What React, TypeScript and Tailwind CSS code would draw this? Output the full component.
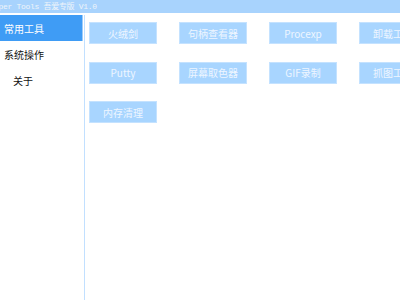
const TOOLS = ['火绒剑', '句柄查看器', 'Procexp', '卸载工具', 'Putty', '屏幕取色器', 'GIF录制', '抓图工具', '内存清理']

const NAV = [
  { label: '常用工具', active: true, indent: false },
  { label: '系统操作', active: false, indent: false },
  { label: '关于', active: false, indent: true },
]

export default function App() {
  return (
    <div className="w-[400px] h-[300px] bg-white overflow-hidden flex flex-col" style={{ fontFamily: '"Noto Sans CJK SC", "Noto Sans", sans-serif' }}>
      <div className="h-[13px] shrink-0 bg-[#a8d3fd] flex items-center overflow-hidden">
        <span className="-ml-[15px] whitespace-nowrap text-[8px] leading-none text-[#eef4fa] tracking-[-0.3px]" style={{ fontFamily: '"Liberation Mono", "Noto Sans CJK SC", monospace' }}>
          Helper Tools 吾爱专版 V1.0
        </span>
      </div>
      <div className="flex flex-1 mt-[2px] min-h-0">
        <div className="w-[84px] shrink-0 flex flex-col">
          {NAV.map(n => (
            <div key={n.label}
              className={`h-[26px] flex items-center text-[10px] ${n.indent ? 'pl-[13px]' : 'pl-[4px]'} ${n.active ? 'w-[83px] bg-[#3f9cf5] text-white border-r border-[#9ccbfa]' : 'text-[#111]'}`}>
              {n.label}
            </div>
          ))}
        </div>
        <div className="w-px bg-[#c2e0ff] shrink-0" />
        <div className="flex-1 overflow-hidden pl-[4px] pt-[7px]">
          <div className="grid grid-cols-[repeat(4,68px)] gap-x-[22px] gap-y-[17.5px]">
            {TOOLS.map(t => (
              <button key={t} className="h-[22px] w-[68px] bg-[#a8d5ff] border border-[#c4e2ff] text-[10px] text-[#eef6ff] flex items-center justify-center whitespace-nowrap">
                {t}
              </button>
            ))}
          </div>
        </div>
      </div>
    </div>
  )
}
